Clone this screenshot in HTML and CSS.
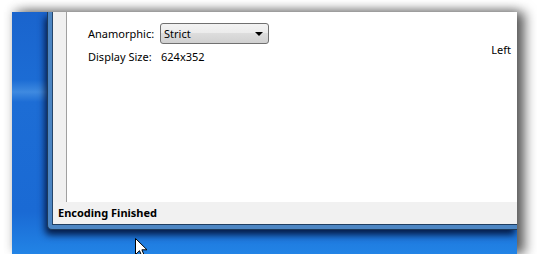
FILE: index.html
```html
<!DOCTYPE html>
<html lang="en">
<head>
    <meta charset="UTF-8">
    <title>Encoding Finished</title>
    <link rel="stylesheet" href="styles.css">
</head>
<body>

    <div class="shot">
        <div class="desktop">
            <div class="window">
                <div class="client">
                    <div class="main">
                        <div class="rail"></div>
                        <div class="content">
                            <div class="form">
                                <div class="row">
                                    <span class="label">Anamorphic:</span>
                                    <div class="combo">
                                        <span>Strict</span>
                                        <span class="arrow"></span>
                                    </div>
                                </div>
                                <div class="row">
                                    <span class="label">Display Size:</span>
                                    <span class="value">624x352</span>
                                </div>
                            </div>
                            <div class="side">Left</div>
                        </div>
                    </div>
                    <div class="status">Encoding Finished</div>
                </div>
            </div>
        </div>

        <svg class="cursor" width="13" height="21" viewBox="0 0 13 21">
            <path d="M0.5 0.5 L0.5 16.5 L4.5 12.7 L7.3 19.2 L9.6 18.2 L6.9 11.8 L12 11.8 Z" fill="#fff" stroke="#000" stroke-width="1"/>
        </svg>
    </div>

</body>
</html>
```

FILE: styles.css
```css
body {
    margin: 0;
    background-color: white;
    font-family: "Segoe UI", "Noto Sans", sans-serif;
    font-size: 11px;
    color: black;
    overflow: hidden;
}

.shot {
    position: relative;
    width: 537px;
    height: 254px;
    padding: 12px 0 0 12px;
    box-sizing: border-box;
}

.desktop {
    width: 505px;
    height: 242px;
    overflow: hidden;
    padding-left: 35px;
    box-sizing: border-box;
    background: linear-gradient(180deg, #1a64cd 0, #1c6cd4 68px, #3f8ae0 80px, #1d6dd5 90px, #1a6ad4 200px, #2284e6 242px);
    box-shadow: 8px 0 11px rgba(0, 0, 0, 0.6), 0 -3px 9px rgba(0, 0, 0, 0.2);
}

.window {
    height: 218px;
    background-color: #4d86c3;
    border-left: 1px solid #1c3a5c;
    border-bottom: 1px solid #1c3a5c;
    border-bottom-left-radius: 5px;
    padding: 0 0 5px 4px;
    box-sizing: border-box;
    box-shadow: -2px 5px 7px rgba(0, 12, 45, 0.85);
}

.client {
    display: flex;
    flex-direction: column;
    height: 212px;
    border-left: 1px solid #25466b;
    border-bottom: 1px solid #1f3d60;
    background-color: #f0f0f0;
}

.main {
    display: flex;
    height: 190px;
}

.rail {
    width: 13px;
    background-color: #f0f0f0;
    border-right: 1px solid #a0a0a0;
}

.content {
    flex: 1;
    display: flex;
    background-color: white;
    padding: 11px 6px 0 21px;
}

.form {
    flex: 1;
}

.row {
    display: flex;
    align-items: center;
    height: 21px;
}

.row + .row {
    margin-top: 2px;
}

.label {
    width: 72px;
}

.value {
    padding-left: 1px;
}

.combo {
    width: 109px;
    height: 21px;
    box-sizing: border-box;
    display: flex;
    align-items: center;
    justify-content: space-between;
    padding: 0 5px 0 3px;
    border: 1px solid #707070;
    border-radius: 3px;
    background: linear-gradient(180deg, #f3f3f3 0, #ebebeb 50%, #dddddd 50%, #d0d0d0 100%);
}

.arrow {
    width: 0;
    height: 0;
    border-left: 4px solid transparent;
    border-right: 4px solid transparent;
    border-top: 4px solid black;
}

.side {
    margin-top: 19px;
    line-height: 16px;
}

.status {
    height: 21px;
    line-height: 21px;
    padding-left: 5px;
    font-weight: bold;
    background-color: #f1f1f1;
}

.cursor {
    position: absolute;
    left: 135px;
    top: 238px;
}
```
